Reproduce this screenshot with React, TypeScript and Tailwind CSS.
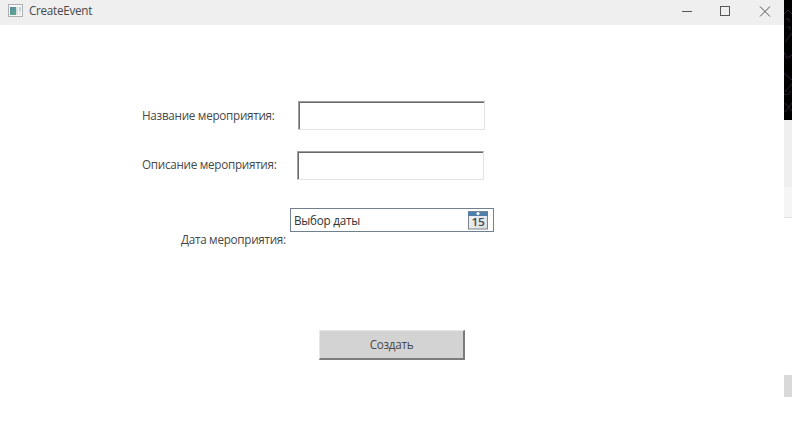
import type { ReactNode } from "react";

function WindowIcon() {
  return (
    <svg width="16" height="14" viewBox="0 0 16 14" shapeRendering="crispEdges">
      <defs>
        <linearGradient id="pane" x1="0" y1="0" x2="0.4" y2="1">
          <stop offset="0" stopColor="#5b8ba3" />
          <stop offset="1" stopColor="#5ba48e" />
        </linearGradient>
      </defs>
      <rect x="0.5" y="0.5" width="14" height="12" fill="#f7f8f8" stroke="#b0b0b4" />
      <rect x="2" y="3" width="6" height="8" fill="url(#pane)" />
      <rect x="8" y="3" width="2" height="8" fill="#d6dfe0" />
      <rect x="11" y="3" width="2" height="4" fill="#b5d5cd" />
      <rect x="11" y="7" width="2" height="4" fill="#e3e8e8" />
    </svg>
  );
}

function CalendarIcon() {
  return (
    <svg width="20" height="19" viewBox="0 0 20 19">
      <defs>
        <linearGradient id="page" x1="0" y1="0" x2="1" y2="1">
          <stop offset="0" stopColor="#f4f6f8" />
          <stop offset="1" stopColor="#d9dde1" />
        </linearGradient>
      </defs>
      <rect x="0.5" y="0.5" width="19" height="17.5" fill="url(#page)" stroke="#7b848d" />
      <rect x="0" y="0" width="20" height="5" fill="#4f7fa9" />
      <rect x="0" y="0" width="20" height="1" fill="#74869a" />
      <circle cx="10" cy="2.6" r="1.6" fill="#eef5fb" />
      <text x="10" y="15.4" textAnchor="middle" fontSize="10.5" fontWeight="600" textLength="13" lengthAdjust="spacingAndGlyphs" fill="#444b52" className="font-['Open_Sans',sans-serif]">
        15
      </text>
    </svg>
  );
}

function Label({ children, className }: { children: ReactNode; className: string }) {
  return <label className={`block whitespace-nowrap leading-4 ${className}`}>{children}</label>;
}

const field =
  "h-[29px] w-[187px] border border-t-[#a0a0a0] border-l-[#a0a0a0] border-r-[#e3e3e3] border-b-[#e3e3e3] bg-white";
const fieldInner = "block h-full w-full border-t border-l border-[#696969] bg-transparent outline-none";

export default function App() {
  return (
    <div className="flex h-[424px] w-[792px] overflow-hidden bg-white font-['Open_Sans','Noto_Sans',sans-serif] text-[11.7px] tracking-[-0.28px] text-[#484848]">
      <div className="flex w-[784px] flex-col">
        <header className="flex h-[25px] items-start bg-[#efefef] pl-2">
          <div className="pt-1">
            <WindowIcon />
          </div>
          <h1 className="mt-[2px] ml-[5px] leading-4">CreateEvent</h1>
          <svg className="ml-auto" width="108" height="24" viewBox="0 0 108 24" fill="none" stroke="#555">
            <path d="M6 11.5h10M44.5 6.5h9v9h-9z" shapeRendering="crispEdges" />
            <path d="M84 6.5l10 10M94 6.5l-10 10" />
          </svg>
        </header>
        <main className="flex flex-col">
          <div className="flex pt-[76px] pl-[142px]">
            <Label className="mt-[6px] w-[156px]">Название мероприятия:</Label>
            <div className={field}>
              <input className={fieldInner} />
            </div>
          </div>
          <div className="flex pt-[21px] pl-[142px]">
            <Label className="mt-[5px] w-[155px]">Описание мероприятия:</Label>
            <div className={field}>
              <input className={fieldInner} />
            </div>
          </div>
          <div className="flex pt-[28px] pl-[181px]">
            <Label className="mt-[23px] w-[109px]">Дата мероприятия:</Label>
            <div className="flex h-[24px] w-[204px] items-start justify-between border border-[#71808e] pt-[2px] pr-[5px] pl-[3px] text-[#333]">
              <span className="mt-px leading-4 tracking-[-0.25px]">Выбор даты</span>
              <CalendarIcon />
            </div>
          </div>
          <button className="mt-[83px] ml-[319px] h-[30px] w-[146px] border-t border-r-2 border-b-2 border-l border-t-[#e8e8e8] border-r-[#7b7b7b] border-b-[#7b7b7b] border-l-[#e8e8e8] bg-[#d3d3d3] pb-[2px] leading-4 tracking-[-0.3px]">
            Создать
          </button>
        </main>
      </div>
      <aside className="flex w-2 flex-col">
        <svg className="bg-black" width="8" height="120" viewBox="0 0 8 120" fill="none" stroke="#302035">
          <path d="M0 14l4-4 4 4M2 19h3v3M3 27h3v3M8 33L1 42M0 52l3 6 5-3M0 73l8 7M8 84l-7 8M0 94q4 2 7-3M1 103l7 8M8 103l-7 9" />
        </svg>
        <div className="h-[67px] bg-[#efefef]" />
        <div className="h-[31px] border-b border-[#e0e0e0] bg-[#f5f5f5]" />
        <div className="mt-[157px] h-[22px] bg-[#d9d9d9]" />
      </aside>
    </div>
  );
}
